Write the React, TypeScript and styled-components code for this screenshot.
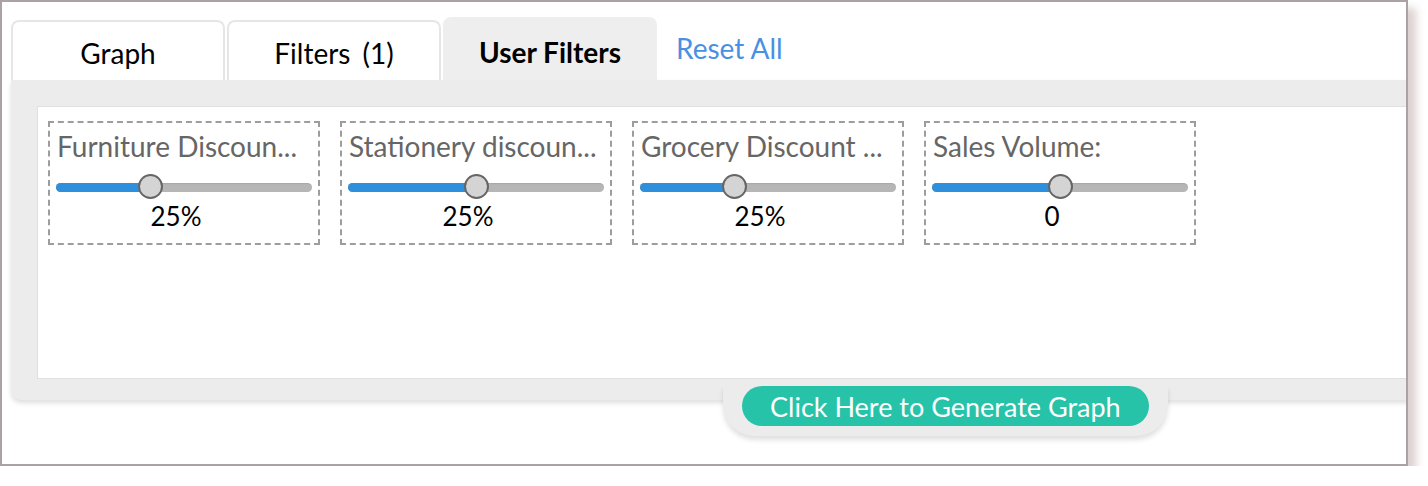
import React from "react";
import styled, { createGlobalStyle } from "styled-components";

const GlobalStyle = createGlobalStyle`
  html, body { margin: 0; padding: 0; background: #ffffff; }
  body { font-family: Lato, "Noto Sans", "Liberation Sans", sans-serif; }
  * { box-sizing: border-box; }
`;

const Frame = styled.div`
  width: 1408px;
  height: 466px;
  border: 2px solid #aaa2a3;
  background: #ffffff;
  box-shadow: 8px 8px 8px rgba(170, 140, 140, 0.4);
  overflow: hidden;
  padding-top: 15px;
`;

const TabBar = styled.div`
  display: flex;
  align-items: flex-end;
  gap: 2px;
  padding-left: 9px;
  height: 63px;
`;

const Tab = styled.div<{ $active?: boolean }>`
  width: 214px;
  height: ${(p) => (p.$active ? 63 : 60)}px;
  display: flex;
  align-items: center;
  justify-content: center;
  border: 2px solid ${(p) => (p.$active ? "#eeeeee" : "#e6e6e6")};
  border-bottom: none;
  border-radius: 8px 8px 0 0;
  background: ${(p) => (p.$active ? "#eeeeee" : "#ffffff")};
  color: #000000;
  font-size: 28px;
  font-weight: ${(p) => (p.$active ? 700 : 400)};
  padding-top: 4px;
`;

const Count = styled.span`
  margin-left: 12px;
`;

const ResetLink = styled.a`
  align-self: flex-start;
  margin-left: 17px;
  padding-top: 14px;
  color: #4a90e2;
  font-size: 28px;
  text-decoration: none;
  cursor: pointer;
`;

const Panel = styled.div`
  margin-left: 9px;
  margin-right: -60px;
  height: 320px;
  background: #ececec;
  padding: 26px 0 21px 26px;
  border-radius: 0 0 0 10px;
  box-shadow: 0 3px 5px rgba(0, 0, 0, 0.13);
`;

const Canvas = styled.div`
  height: 100%;
  background: #ffffff;
  border: 1px solid #e0e0e0;
  display: flex;
  align-items: flex-start;
  gap: 20px;
  padding: 14px 0 0 10px;
`;

const Card = styled.div`
  width: 272px;
  height: 124px;
  border: 2px dashed #9d9d9d;
  padding: 7px 6px 0 6px;
  display: flex;
  flex-direction: column;
`;

const Label = styled.div`
  font-size: 28px;
  line-height: 32px;
  color: #666666;
  white-space: nowrap;
  padding-left: 1px;
`;

const Track = styled.div`
  position: relative;
  margin-top: 21px;
  height: 9px;
  border-radius: 5px;
  background: #b6b6b6;
  box-shadow: inset 0 1px 1px rgba(0, 0, 0, 0.08);
`;

const Fill = styled.div`
  height: 100%;
  border-radius: 5px 0 0 5px;
  background: #2e8fdd;
`;

const Thumb = styled.div`
  position: absolute;
  top: 50%;
  width: 25px;
  height: 25px;
  margin-left: -12.5px;
  margin-top: -14px;
  border-radius: 50%;
  background: #d4d4d4;
  border: 2px solid #666666;
`;

const Value = styled.div`
  margin-top: 9px;
  font-size: 26px;
  line-height: 30px;
  color: #000000;
  text-align: center;
  padding-right: 16px;
`;

const ButtonRow = styled.div`
  display: flex;
  padding-left: 721px;
  margin-top: -14px;
`;

const ButtonTab = styled.div`
  background: #ececec;
  padding: 0 19px 10px;
  border-radius: 0 0 32px 32px;
  box-shadow: 0 4px 5px rgba(0, 0, 0, 0.12);
`;

const GenerateButton = styled.button`
  height: 40px;
  padding: 0 28px;
  border: none;
  border-radius: 20px;
  background: #27c3a9;
  color: #ffffff;
  font-family: Lato, "Noto Sans", sans-serif;
  font-size: 27px;
  cursor: pointer;
`;

type Filter = { label: string; value: string; pos: number };

const filters: Filter[] = [
  { label: "Furniture Discoun...", value: "25%", pos: 0.37 },
  { label: "Stationery discoun...", value: "25%", pos: 0.5 },
  { label: "Grocery Discount ...", value: "25%", pos: 0.37 },
  { label: "Sales Volume:", value: "0", pos: 0.5 },
];

export default function App() {
  return (
    <>
      <GlobalStyle />
      <Frame>
        <TabBar>
          <Tab>Graph</Tab>
          <Tab>
            Filters<Count>(1)</Count>
          </Tab>
          <Tab $active>User Filters</Tab>
          <ResetLink>Reset All</ResetLink>
        </TabBar>
        <Panel>
          <Canvas>
            {filters.map((f) => (
              <Card key={f.label}>
                <Label>{f.label}</Label>
                <Track>
                  <Fill style={{ width: `${f.pos * 100}%` }} />
                  <Thumb style={{ left: `${f.pos * 100}%` }} />
                </Track>
                <Value>{f.value}</Value>
              </Card>
            ))}
          </Canvas>
        </Panel>
        <ButtonRow>
          <ButtonTab>
            <GenerateButton>Click Here to Generate Graph</GenerateButton>
          </ButtonTab>
        </ButtonRow>
      </Frame>
    </>
  );
}
